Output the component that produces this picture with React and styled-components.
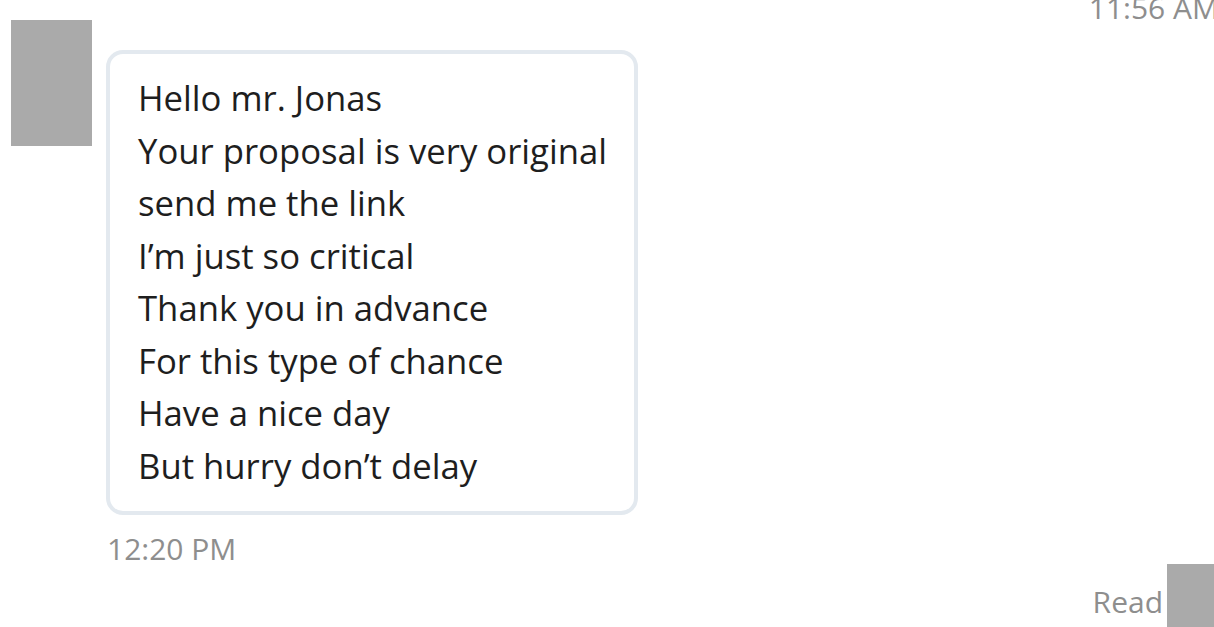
import styled, { createGlobalStyle } from "styled-components";

const GlobalStyle = createGlobalStyle`
  html, body {
    margin: 0;
    padding: 0;
    background: #fff;
    overflow: hidden;
  }
  body {
    font-family: "Open Sans", "Noto Sans", sans-serif;
  }
`;

const Chat = styled.main`
  width: 1214px;
  height: 627px;
  overflow: hidden;
  display: flex;
  flex-direction: column;

  & > * {
    flex-shrink: 0;
  }
`;

const Stamp = styled.div`
  font-size: 30px;
  line-height: 40px;
  color: #8e8e8e;
  white-space: nowrap;
  align-self: ${(p) => (p.right ? "flex-end" : "flex-start")};
`;

const TopStamp = styled(Stamp)`
  margin-top: -12px;
  margin-right: -5px;
  height: 40px;
`;

const Row = styled.div`
  display: flex;
  align-items: flex-start;
  gap: 14px;
  padding-left: 11px;
  margin-top: -8px;
`;

const Avatar = styled.div`
  width: ${(p) => p.w}px;
  height: ${(p) => p.h}px;
  background: #aaaaaa;
  flex-shrink: 0;
`;

const Bubble = styled.div`
  margin-top: 30px;
  width: 532px;
  box-sizing: border-box;
  border: 4px solid #e3e9ef;
  border-radius: 17px;
  padding: 18px 24px 19px 28px;
  font-size: 34.7px;
  line-height: 52.5px;
  color: #1e1e1e;
`;

const Line = styled.div`
  white-space: nowrap;
`;

const SentTime = styled(Stamp)`
  margin-left: 107px;
  margin-top: 14px;
`;

const ReadRow = styled.div`
  display: flex;
  justify-content: flex-end;
  gap: 4px;
  margin-top: -5px;
`;

const ReadLabel = styled(Stamp)`
  align-self: flex-end;
  line-height: 36px;
  margin-bottom: 14px;
`;

const lines = [
  "Hello mr. Jonas",
  "Your proposal is very original",
  "send me the link",
  "I\u2019m just so critical",
  "Thank you in advance",
  "For this type of chance",
  "Have a nice day",
  "But hurry don\u2019t delay",
];

export default function App() {
  return (
    <Chat>
      <GlobalStyle />
      <TopStamp right>11:56 AM</TopStamp>
      <Row>
        <Avatar w={81} h={126} />
        <Bubble>
          {lines.map((line) => (
            <Line key={line}>{line}</Line>
          ))}
        </Bubble>
      </Row>
      <SentTime>12:20 PM</SentTime>
      <ReadRow>
        <ReadLabel>Read</ReadLabel>
        <Avatar w={47} h={70} />
      </ReadRow>
    </Chat>
  );
}
